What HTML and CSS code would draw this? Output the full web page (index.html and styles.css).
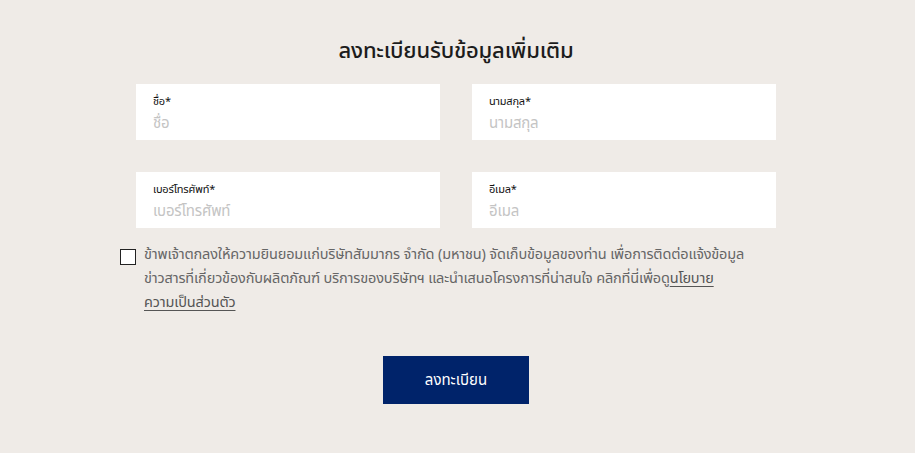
FILE: index.html
```html
<!DOCTYPE html>
<html lang="th">
<head>
<meta charset="utf-8">
<link rel="stylesheet" href="styles.css">
</head>
<body>
<main class="page">
  <h1 class="title">ลงทะเบียนรับข้อมูลเพิ่มเติม</h1>
  <form class="form">
    <div class="grid">
      <label class="field">
        <span class="label">ชื่อ*</span>
        <input class="input" type="text" placeholder="ชื่อ">
      </label>
      <label class="field">
        <span class="label">นามสกุล*</span>
        <input class="input" type="text" placeholder="นามสกุล">
      </label>
      <label class="field">
        <span class="label">เบอร์โทรศัพท์*</span>
        <input class="input" type="text" placeholder="เบอร์โทรศัพท์">
      </label>
      <label class="field">
        <span class="label">อีเมล*</span>
        <input class="input" type="text" placeholder="อีเมล">
      </label>
    </div>
    <div class="consent">
      <span class="box"></span>
      <p class="consent-text">ข้าพเจ้าตกลงให้ความยินยอมแก่บริษัทสัมมากร จำกัด (มหาชน) จัดเก็บข้อมูลของท่าน เพื่อการติดต่อแจ้งข้อมูลข่าวสารที่เกี่ยวข้องกับผลิตภัณฑ์ บริการของบริษัทฯ และนำเสนอโครงการที่น่าสนใจ คลิกที่นี่เพื่อดู<a class="link" href="#">นโยบาย<br>ความเป็นส่วนตัว</a></p>
    </div>
    <div class="actions">
      <button class="btn" type="button">ลงทะเบียน</button>
    </div>
  </form>
</main>
</body>
</html>
```
FILE: styles.css
```css
* { box-sizing: border-box; }
html, body { margin: 0; padding: 0; }
body {
  background: #efebe7;
  font-family: "Noto Sans Thai", "Noto Sans", "DejaVu Sans", sans-serif;
  color: #222;
  width: 915px;
  height: 453px;
  overflow: hidden;
}
.page {
  width: 640px;
  margin-left: 136px;
  padding-top: 36px;
}
.title {
  margin: 0;
  text-align: center;
  font-size: 22px;
  font-weight: 500;
  line-height: 32px;
  color: #1c1c1c;
  letter-spacing: -0.2px;
}
.form { margin-top: 16px; }
.grid {
  display: grid;
  grid-template-columns: 304px 304px;
  column-gap: 32px;
  row-gap: 32px;
}
.field {
  display: flex;
  flex-direction: column;
  background: #fff;
  height: 56px;
  padding: 10px 17px 0;
}
.label {
  font-size: 11px;
  line-height: 16px;
  color: #111;
  letter-spacing: -0.2px;
}
.input {
  border: 0;
  outline: 0;
  padding: 0;
  margin-top: 3px;
  font-family: inherit;
  font-size: 15px;
  line-height: 22px;
  height: 22px;
  color: #333;
  background: transparent;
  letter-spacing: -0.2px;
}
.input::placeholder { color: #c4c4c4; }
.consent {
  display: flex;
  align-items: flex-start;
  gap: 8px;
  margin: 15px 0 0 -16px;
  width: 656px;
}
.box {
  flex: 0 0 16px;
  width: 16px;
  height: 16px;
  border: 1.5px solid #222;
  background: #fff;
  margin-top: 6px;
}
.consent-text {
  margin: 0;
  width: 624px;
  font-size: 14.5px;
  line-height: 24px;
  letter-spacing: -0.15px;
  color: #666;
}
.link {
  color: #555;
  text-decoration: underline;
  text-underline-offset: 3px;
}
.actions {
  display: flex;
  justify-content: center;
  margin-top: 41px;
}
.btn {
  width: 146px;
  height: 48px;
  border: 0;
  background: #00236a;
  color: #fff;
  font-family: inherit;
  font-size: 15px;
}
```
